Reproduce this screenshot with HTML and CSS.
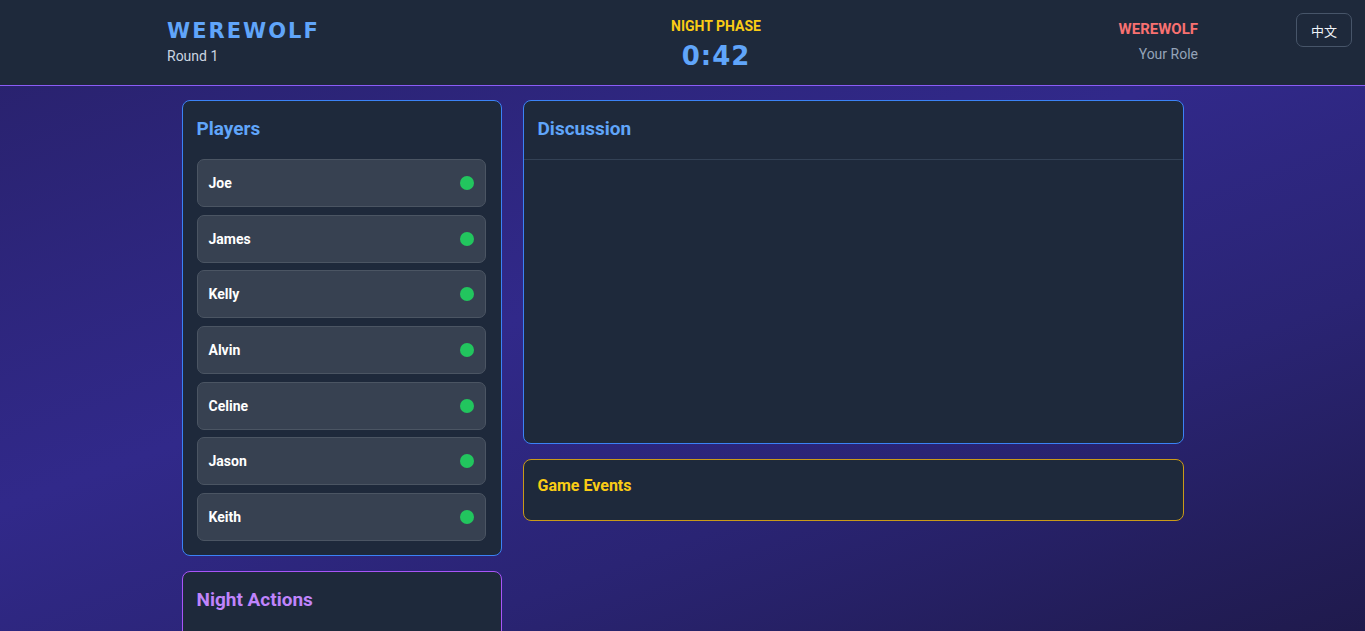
FILE: index.html
```html
<!DOCTYPE html>
<html lang="en">
<head>
<meta charset="utf-8">
<title>Werewolf</title>
<link rel="stylesheet" href="styles.css">
</head>
<body>
<header class="topbar">
  <div class="topbar-inner">
    <div class="brand">
      <div class="logo">WEREWOLF</div>
      <div class="round">Round 1</div>
    </div>
    <div class="phase">
      <div class="phase-name">NIGHT PHASE</div>
      <div class="timer">0:42</div>
    </div>
    <div class="role">
      <div class="role-name">WEREWOLF</div>
      <div class="role-label">Your Role</div>
    </div>
  </div>
  <button class="lang">中文</button>
</header>
<main class="layout">
  <aside class="sidebar">
    <section class="card card-blue players">
      <h2 class="card-title title-blue">Players</h2>
      <ul class="player-list">
        <li class="player"><span>Joe</span><i class="dot"></i></li>
        <li class="player"><span>James</span><i class="dot"></i></li>
        <li class="player"><span>Kelly</span><i class="dot"></i></li>
        <li class="player"><span>Alvin</span><i class="dot"></i></li>
        <li class="player"><span>Celine</span><i class="dot"></i></li>
        <li class="player"><span>Jason</span><i class="dot"></i></li>
        <li class="player"><span>Keith</span><i class="dot"></i></li>
      </ul>
    </section>
    <section class="card card-purple night">
      <h2 class="card-title title-purple">Night Actions</h2>
    </section>
  </aside>
  <div class="main-col">
    <section class="card card-blue discussion">
      <div class="disc-head"><h2 class="card-title title-blue">Discussion</h2></div>
      <div class="disc-body"></div>
    </section>
    <section class="card card-yellow events">
      <h3 class="events-title">Game Events</h3>
    </section>
  </div>
</main>
</body>
</html>
```
FILE: styles.css
```css
* { box-sizing: border-box; }
html, body { margin: 0; padding: 0; }
body {
  font-family: "Roboto", "Noto Sans", sans-serif;
  color: #e2e8f0;
  min-height: 760px;
  background: linear-gradient(160deg, #28216a 0%, #31298a 45%, #2a2474 70%, #1f1a4c 100%) fixed;
}
.topbar {
  position: relative;
  height: 86px;
  background: #1e293b;
  border-bottom: 1px solid #8b5cf6;
}
.topbar-inner {
  width: 1031px;
  margin: 0 auto;
  height: 85px;
  display: flex;
  justify-content: space-between;
  align-items: center;
}
.brand { width: 267px; padding-bottom: 2px; }
.logo {
  font-family: "DejaVu Sans", sans-serif;
  font-weight: 700;
  font-size: 21px;
  letter-spacing: 2px;
  color: #60a5fa;
  line-height: 24px;
}
.round { font-size: 14px; color: #cbd5e1; margin-top: 5px; }
.phase { text-align: center; padding-top: 4px; }
.phase-name { font-size: 14px; font-weight: 700; color: #facc15; line-height: 16px; }
.timer {
  font-family: "DejaVu Sans", sans-serif;
  font-weight: 700;
  font-size: 26px;
  color: #60a5fa;
  line-height: 30px;
  margin-top: 7px;
  letter-spacing: 1px;
}
.role { width: 200px; text-align: right; padding-bottom: 3px; }
.role-name { font-size: 15px; font-weight: 700; color: #f87171; line-height: 18px; }
.role-label { font-size: 14px; color: #94a3b8; margin-top: 8px; }
.lang {
  position: absolute;
  top: 13px;
  right: 13px;
  width: 56px;
  height: 34px;
  background: #1e293b;
  border: 1px solid #475569;
  border-radius: 7px;
  color: #f1f5f9;
  font-family: "Noto Sans CJK SC", sans-serif;
  font-size: 13px;
  padding: 0;
}
.layout {
  width: 1002px;
  margin: 14px auto 0;
  display: grid;
  grid-template-columns: 320px 1fr;
  gap: 21px;
  align-items: start;
}
.sidebar, .main-col { display: flex; flex-direction: column; gap: 15px; }
.card {
  background: #1e293b;
  border: 1px solid;
  border-radius: 8px;
}
.card-blue { border-color: #3b82f6; }
.card-purple { border-color: #a855f7; }
.card-yellow { border-color: #ca9a18; }
.card-title {
  margin: 0;
  font-size: 19px;
  font-weight: 700;
  line-height: 24px;
}
.title-blue { color: #60a5fa; }
.title-purple { color: #c084fc; }
.players { padding: 16px 15px 14px 14px; }
.player-list {
  list-style: none;
  margin: 18px 0 0;
  padding: 0;
  display: flex;
  flex-direction: column;
  gap: 7.7px;
}
.player {
  height: 48px;
  background: #374151;
  border: 1px solid #4b5563;
  border-radius: 7px;
  display: flex;
  align-items: center;
  justify-content: space-between;
  padding: 0 11px 0 11px;
  font-size: 14px;
  font-weight: 700;
  color: #ffffff;
}
.dot {
  width: 14px;
  height: 14px;
  border-radius: 50%;
  background: #22c55e;
}
.night { padding: 16px 14px; height: 90px; }
.discussion { height: 344px; display: flex; flex-direction: column; }
.disc-head { padding: 16px 14px 18px; border-bottom: 1px solid #334155; }
.disc-body { flex: 1; }
.events { height: 62px; padding: 16px 14px 0; }
.events-title { margin: 0; font-size: 16px; line-height: 20px; font-weight: 700; color: #facc15; }
```
